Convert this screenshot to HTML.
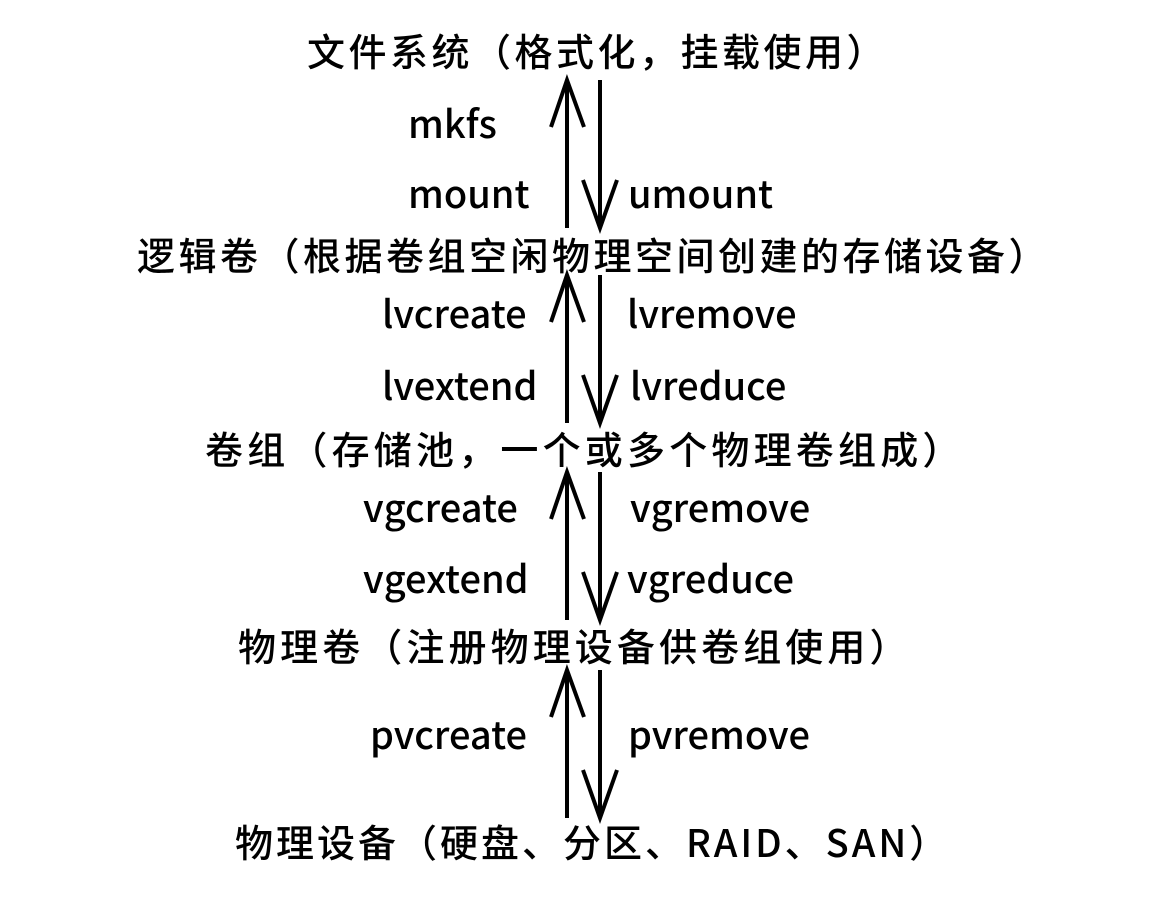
<!DOCTYPE html>
<html><head><meta charset="utf-8"><style>
body{margin:0;width:1158px;height:905px;background:#fff;position:relative;overflow:hidden;font-family:"Noto Sans CJK SC","Liberation Sans",sans-serif;font-weight:500;color:#000}
.t{position:absolute;font-size:38px;line-height:40px;height:40px;white-space:nowrap}
svg{position:absolute;left:0;top:0}
</style></head><body>
<div class="t" style="left:307px;top:30px;letter-spacing:3.5px">文件系统（格式化，挂载使用）</div>
<div class="t" style="left:137px;top:234px;letter-spacing:3.5px">逻辑卷（根据卷组空闲物理空间创建的存储设备）</div>
<div class="t" style="left:205px;top:428px;letter-spacing:4.2px">卷组（存储池，一个或多个物理卷组成）</div>
<div class="t" style="left:238px;top:625px;letter-spacing:4.1px">物理卷（注册物理设备供卷组使用）</div>
<div class="t" style="left:235px;top:821px;letter-spacing:3px">物理设备（硬盘、分区、RAID、SAN）</div>
<div class="t" style="left:408px;top:102px">mkfs</div>
<div class="t" style="left:408px;top:172px">mount</div>
<div class="t" style="left:628px;top:172px">umount</div>
<div class="t" style="left:382px;top:292px">lvcreate</div>
<div class="t" style="left:627px;top:292px">lvremove</div>
<div class="t" style="left:382px;top:364px">lvextend</div>
<div class="t" style="left:630px;top:364px">lvreduce</div>
<div class="t" style="left:363px;top:486px">vgcreate</div>
<div class="t" style="left:630px;top:486px">vgremove</div>
<div class="t" style="left:363px;top:557px">vgextend</div>
<div class="t" style="left:627px;top:557px">vgreduce</div>
<div class="t" style="left:370px;top:713px">pvcreate</div>
<div class="t" style="left:628px;top:713px">pvremove</div>
<svg width="1158" height="905" fill="none" stroke="#000" stroke-width="4">
<g id="a">
<path d="M567 80V228M551 127L567 80L584 127"/>
<path d="M600 80V228M583 180L600 228L617 180"/>
</g>
<use href="#a" y="195"/>
<use href="#a" y="392"/>
<use href="#a" y="590"/>
</svg>
</body></html>
